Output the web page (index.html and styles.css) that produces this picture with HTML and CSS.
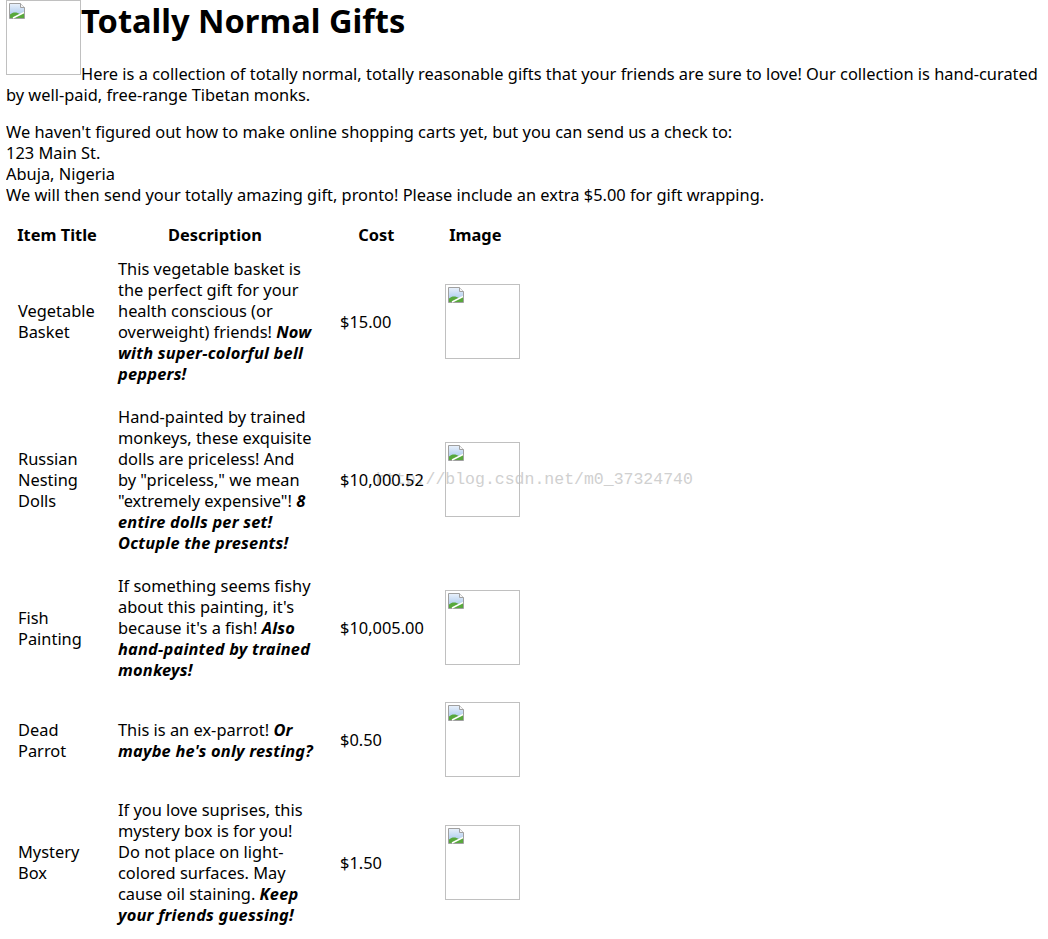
FILE: index.html
```html
<!DOCTYPE html>
<html>
<head>
<meta charset="utf-8">
<title>Totally Normal Gifts</title>
<link rel="stylesheet" href="styles.css">
</head>
<body>
<p class="intro"><span class="broken logo"><svg class="bi" width="16" height="16" viewBox="0 0 16 16"><defs><linearGradient id="sky" x1="0" y1="0" x2="0" y2="1"><stop offset="0" stop-color="#e9f1fb"/><stop offset="1" stop-color="#9cc0ea"/></linearGradient></defs><path d="M0.5 0.5H11.5L15.5 4.5V15.5H0.5Z" fill="url(#sky)" stroke="#a0a0a0"/><path d="M11.5 0.5V4.5H15.5" fill="#f4f4f4" stroke="#a0a0a0"/><path d="M1 15V11.5C4 8.5 8 9 11 11L15 9V15Z" fill="#58a83c"/><path d="M4 15L15 9.5" stroke="#fff" stroke-width="1.4"/></svg></span><span class="title">Totally Normal Gifts</span>Here is a collection of totally normal, totally reasonable gifts that your friends are sure to love! Our collection is hand-curated by well-paid, free-range Tibetan monks.</p>
<p class="info">We haven't figured out how to make online shopping carts yet, but you can send us a check to:<br>123 Main St.<br>Abuja, Nigeria<br>We will then send your totally amazing gift, pronto! Please include an extra $5.00 for gift wrapping.</p>
<table class="gifts">
<thead>
<tr><th class="c-title">Item Title</th><th class="c-desc">Description</th><th class="c-cost">Cost</th><th class="c-img">Image</th></tr>
</thead>
<tbody>
<tr>
<td class="c-title">Vegetable Basket</td>
<td class="c-desc">This vegetable basket is the perfect gift for your health conscious (or overweight) friends! <strong><em>Now with super-colorful bell peppers!</em></strong></td>
<td class="c-cost">$15.00</td>
<td class="c-img"><span class="broken pic"><svg class="bi" width="16" height="16" viewBox="0 0 16 16"><path d="M0.5 0.5H11.5L15.5 4.5V15.5H0.5Z" fill="url(#sky)" stroke="#a0a0a0"/><path d="M11.5 0.5V4.5H15.5" fill="#f4f4f4" stroke="#a0a0a0"/><path d="M1 15V11.5C4 8.5 8 9 11 11L15 9V15Z" fill="#58a83c"/><path d="M4 15L15 9.5" stroke="#fff" stroke-width="1.4"/></svg></span></td>
</tr>
<tr>
<td class="c-title">Russian Nesting Dolls</td>
<td class="c-desc">Hand-painted by trained monkeys, these exquisite dolls are priceless! And by "priceless," we mean "extremely expensive"! <strong><em>8 entire dolls per set! Octuple the presents!</em></strong></td>
<td class="c-cost">$10,000.52</td>
<td class="c-img"><span class="broken pic"><svg class="bi" width="16" height="16" viewBox="0 0 16 16"><path d="M0.5 0.5H11.5L15.5 4.5V15.5H0.5Z" fill="url(#sky)" stroke="#a0a0a0"/><path d="M11.5 0.5V4.5H15.5" fill="#f4f4f4" stroke="#a0a0a0"/><path d="M1 15V11.5C4 8.5 8 9 11 11L15 9V15Z" fill="#58a83c"/><path d="M4 15L15 9.5" stroke="#fff" stroke-width="1.4"/></svg></span></td>
</tr>
<tr>
<td class="c-title">Fish Painting</td>
<td class="c-desc">If something seems fishy about this painting, it's because it's a fish! <strong><em>Also hand-painted by trained monkeys!</em></strong></td>
<td class="c-cost">$10,005.00</td>
<td class="c-img"><span class="broken pic"><svg class="bi" width="16" height="16" viewBox="0 0 16 16"><path d="M0.5 0.5H11.5L15.5 4.5V15.5H0.5Z" fill="url(#sky)" stroke="#a0a0a0"/><path d="M11.5 0.5V4.5H15.5" fill="#f4f4f4" stroke="#a0a0a0"/><path d="M1 15V11.5C4 8.5 8 9 11 11L15 9V15Z" fill="#58a83c"/><path d="M4 15L15 9.5" stroke="#fff" stroke-width="1.4"/></svg></span></td>
</tr>
<tr>
<td class="c-title">Dead Parrot</td>
<td class="c-desc">This is an ex-parrot! <strong><em>Or maybe he's only resting?</em></strong></td>
<td class="c-cost">$0.50</td>
<td class="c-img"><span class="broken pic"><svg class="bi" width="16" height="16" viewBox="0 0 16 16"><path d="M0.5 0.5H11.5L15.5 4.5V15.5H0.5Z" fill="url(#sky)" stroke="#a0a0a0"/><path d="M11.5 0.5V4.5H15.5" fill="#f4f4f4" stroke="#a0a0a0"/><path d="M1 15V11.5C4 8.5 8 9 11 11L15 9V15Z" fill="#58a83c"/><path d="M4 15L15 9.5" stroke="#fff" stroke-width="1.4"/></svg></span></td>
</tr>
<tr>
<td class="c-title">Mystery Box</td>
<td class="c-desc">If you love suprises, this mystery box is for you! Do not place on light-colored surfaces. May cause oil staining. <strong><em>Keep your friends guessing!</em></strong></td>
<td class="c-cost">$1.50</td>
<td class="c-img"><span class="broken pic"><svg class="bi" width="16" height="16" viewBox="0 0 16 16"><path d="M0.5 0.5H11.5L15.5 4.5V15.5H0.5Z" fill="url(#sky)" stroke="#a0a0a0"/><path d="M11.5 0.5V4.5H15.5" fill="#f4f4f4" stroke="#a0a0a0"/><path d="M1 15V11.5C4 8.5 8 9 11 11L15 9V15Z" fill="#58a83c"/><path d="M4 15L15 9.5" stroke="#fff" stroke-width="1.4"/></svg></span></td>
</tr>
</tbody>
</table>
<div class="watermark">http://blog.csdn.net/m0_37324740</div>
</body>
</html>
```
FILE: styles.css
```css
html { background: #fff; }
body {
  margin: 0 6px;
  font-family: "Noto Sans", "Open Sans", sans-serif;
  font-size: 16.4px;
  line-height: 21px;
  color: #000;
}
p { margin: 0 0 16px; }

.broken {
  box-sizing: border-box;
  width: 75px;
  height: 75px;
  border: 1px solid #c0c0c0;
  background: transparent;
}
.broken .bi { display: block; margin: 2px 0 0 2px; }
.logo { display: inline-block; vertical-align: 5px; }
.pic { display: block; }

.title {
  display: inline-block;
  vertical-align: top;
  width: 0;
  white-space: nowrap;
  font-size: 32.6px;
  font-weight: bold;
  line-height: 41px;
}

.gifts { border-spacing: 2px; margin: 0; }
.gifts th {
  padding: 1px;
  font-weight: bold;
  text-align: center;
  vertical-align: middle;
}
.gifts td {
  padding: 10px;
  vertical-align: middle;
  text-align: left;
}
.gifts strong em {
  font-weight: bold;
  font-style: italic;
  letter-spacing: 0.2px;
}
.gifts td.c-title { width: 78px; }
.gifts td.c-desc { width: 197px; padding-right: 13px; }
.gifts td.c-cost { width: 82px; padding-right: 9px; white-space: nowrap; }
.gifts td.c-img { width: 75px; }
.gifts th.c-desc { padding-right: 7px; }
.gifts th.c-cost { padding-right: 11px; }
.gifts th.c-img { padding-right: 15px; }

.watermark {
  position: absolute;
  left: 376px;
  top: 469px;
  z-index: -1;
  font-family: "Liberation Mono", "DejaVu Sans Mono", monospace;
  font-size: 16.5px;
  line-height: 22px;
  color: #d0d0d0;
  white-space: nowrap;
}
```
